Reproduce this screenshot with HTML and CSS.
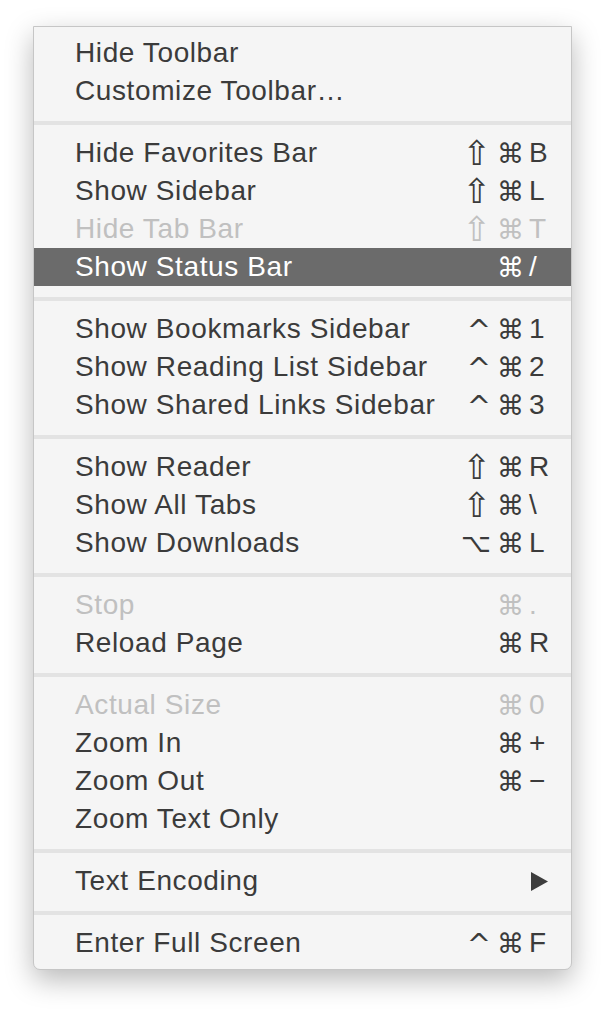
FILE: index.html
```html
<!DOCTYPE html>
<html lang="en">
<head>
  <meta charset="UTF-8">
  <title>View Menu</title>
  <link rel="stylesheet" href="styles.css">
</head>
<body>
  <div class="menu">
    <div class="item"><span class="label">Hide Toolbar</span></div>
    <div class="item"><span class="label">Customize Toolbar…</span></div>
    <div class="sep"></div>
    <div class="item"><span class="label">Hide Favorites Bar</span><span class="mods"><span class="shift">⇧</span><span class="cmd">⌘</span></span><span class="key">B</span></div>
    <div class="item"><span class="label">Show Sidebar</span><span class="mods"><span class="shift">⇧</span><span class="cmd">⌘</span></span><span class="key">L</span></div>
    <div class="item disabled"><span class="label">Hide Tab Bar</span><span class="mods"><span class="shift">⇧</span><span class="cmd">⌘</span></span><span class="key">T</span></div>
    <div class="item active"><span class="label">Show Status Bar</span><span class="mods"><span class="cmd">⌘</span></span><span class="key">/</span></div>
    <div class="sep"></div>
    <div class="item"><span class="label">Show Bookmarks Sidebar</span><span class="mods"><span class="ctrl">^</span><span class="cmd">⌘</span></span><span class="key">1</span></div>
    <div class="item"><span class="label">Show Reading List Sidebar</span><span class="mods"><span class="ctrl">^</span><span class="cmd">⌘</span></span><span class="key">2</span></div>
    <div class="item"><span class="label">Show Shared Links Sidebar</span><span class="mods"><span class="ctrl">^</span><span class="cmd">⌘</span></span><span class="key">3</span></div>
    <div class="sep"></div>
    <div class="item"><span class="label">Show Reader</span><span class="mods"><span class="shift">⇧</span><span class="cmd">⌘</span></span><span class="key">R</span></div>
    <div class="item"><span class="label">Show All Tabs</span><span class="mods"><span class="shift">⇧</span><span class="cmd">⌘</span></span><span class="key">\</span></div>
    <div class="item"><span class="label">Show Downloads</span><span class="mods"><span class="opt">⌥</span><span class="cmd">⌘</span></span><span class="key">L</span></div>
    <div class="sep"></div>
    <div class="item disabled"><span class="label">Stop</span><span class="mods"><span class="cmd">⌘</span></span><span class="key">.</span></div>
    <div class="item"><span class="label">Reload Page</span><span class="mods"><span class="cmd">⌘</span></span><span class="key">R</span></div>
    <div class="sep"></div>
    <div class="item disabled"><span class="label">Actual Size</span><span class="mods"><span class="cmd">⌘</span></span><span class="key">0</span></div>
    <div class="item"><span class="label">Zoom In</span><span class="mods"><span class="cmd">⌘</span></span><span class="key">+</span></div>
    <div class="item"><span class="label">Zoom Out</span><span class="mods"><span class="cmd">⌘</span></span><span class="key">−</span></div>
    <div class="item"><span class="label">Zoom Text Only</span></div>
    <div class="sep"></div>
    <div class="item"><span class="label">Text Encoding</span>
      <svg class="arrow" width="17" height="19" viewBox="0 0 17 19"><polygon points="0,0 17,9.5 0,19" fill="#3d3d3d"/></svg>
    </div>
    <div class="sep"></div>
    <div class="item"><span class="label">Enter Full Screen</span><span class="mods"><span class="ctrl">^</span><span class="cmd">⌘</span></span><span class="key">F</span></div>
  </div>
</body>
</html>
```

FILE: styles.css
```css
body {
  margin: 0;
  padding-bottom: 60px;
  background: #fff;
  font-family: "Liberation Sans", "DejaVu Sans", sans-serif;
}
.menu {
  margin: 26px 0 0 33px;
  width: 537px;
  padding: 7px 0 7px;
  background: #f5f5f5;
  border: 1px solid #c6c6c6;
  border-radius: 0 0 7px 7px;
  box-shadow: 0 10px 28px rgba(0, 0, 0, 0.28);
}
.item {
  display: flex;
  align-items: center;
  height: 38px;
  padding: 0 20px 0 41px;
  font-size: 28px;
  letter-spacing: 0.6px;
  color: #3b3b3b;
}
.item.disabled {
  color: #c0c0c0;
}
.item.active {
  background: #6b6b6b;
  color: #fff;
}
.label {
  flex: 1;
}
.mods {
  display: flex;
  align-items: center;
  gap: 6px;
  font-family: "DejaVu Sans", sans-serif;
  letter-spacing: 0;
  line-height: 1;
  margin-right: 5px;
}
.cmd {
  font-size: 27px;
}
.shift {
  font-size: 34px;
}
.ctrl {
  font-size: 29px;
  margin-top: 3px;
}
.opt {
  font-size: 26px;
}
.key {
  width: 22px;
}
.arrow {
  margin-right: 3px;
}
.sep {
  height: 4px;
  margin: 11px 0 9px;
  background: #e3e3e3;
}
```
